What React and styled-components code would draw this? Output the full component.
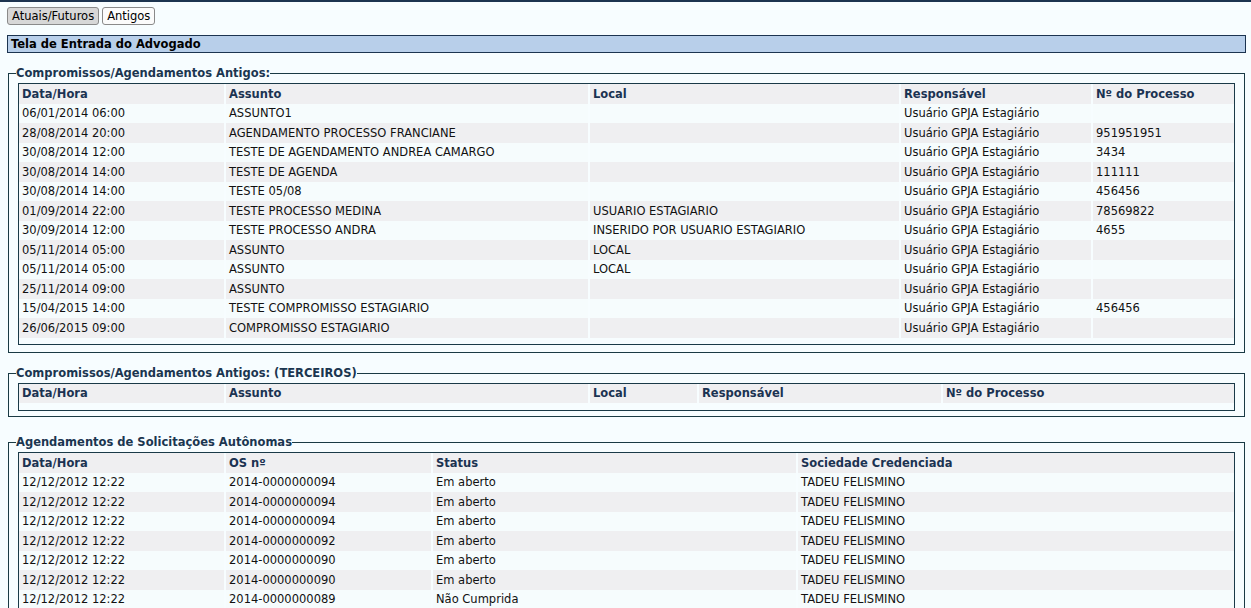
import React from "react";
import styled, { createGlobalStyle } from "styled-components";

const Global = createGlobalStyle`
  html, body { margin: 0; padding: 0; }
  body {
    background: #f7fdff;
    font-family: "DejaVu Sans", Verdana, sans-serif;
    font-size: 11.5px;
    color: #111;
    border-top: 2px solid #1c3450;
  }
`;

const Page = styled.div`
  padding: 5px 5px 0 7px;
`;

const Tabs = styled.div`
  display: flex;
  gap: 3px;
  margin-bottom: 10px;
`;

const TabButton = styled.button`
  font-family: "DejaVu Sans", Verdana, sans-serif;
  font-size: 11.5px;
  height: 18px;
  padding: 0 4px;
  border: 1px solid #8a8a8a;
  border-radius: 3px;
  color: #000;
  background: ${(p) => (p.$active ? "#d7d7d7" : "#fbfbfb")};
  line-height: 14px;
`;

const TitleBar = styled.div`
  background: #b8cfea;
  border: 1px solid #1c3450;
  font-weight: bold;
  height: 16px;
  line-height: 16px;
  padding-left: 3px;
  margin-bottom: 14px;
  color: #000;
`;

const Field = styled.fieldset`
  min-width: 0;
  margin: 0 1px ${(p) => p.$mb || 0}px 1px;
  padding: 3px 9px ${(p) => p.$pb ?? 7}px 9px;
  border: 1px solid #1a3a44;
  border-radius: 0;
`;

const Legend = styled.legend`
  font-weight: bold;
  color: #1b3650;
  padding: 0;
  margin-left: -2px;
  line-height: 13px;
`;

const TableBox = styled.div`
  border: 1px solid #1a3a48;
  padding: 0 0 ${(p) => p.$pb || 6}px 0;
  overflow: hidden;
`;

const Table = styled.table`
  table-layout: fixed;
  border-collapse: separate;
  border-spacing: 2px 0;
  margin: 0 -2px;
  width: calc(100% + 4px);
`;

const Th = styled.th`
  text-align: left;
  font-weight: bold;
  color: #1b3352;
  background: #efeff1;
  padding: 0 0 0 3px;
  height: 19.5px;
  white-space: nowrap;
`;

const Tr = styled.tr`
  background: ${(p) => (p.$odd ? "#efeff1" : "#f6fcfd")};
`;

const Td = styled.td`
  padding: 0 0 0 3px;
  height: 19.5px;
  white-space: nowrap;
  overflow: hidden;
`;

const compCols = [205, 362, 309, 190, 142];
const compHeaders = ["Data/Hora", "Assunto", "Local", "Responsável", "Nº do Processo"];
const R = "Usuário GPJA Estagiário";
const compRows = [
  ["06/01/2014 06:00", "ASSUNTO1", "", R, ""],
  ["28/08/2014 20:00", "AGENDAMENTO PROCESSO FRANCIANE", "", R, "951951951"],
  ["30/08/2014 12:00", "TESTE DE AGENDAMENTO ANDREA CAMARGO", "", R, "3434"],
  ["30/08/2014 14:00", "TESTE DE AGENDA", "", R, "111111"],
  ["30/08/2014 14:00", "TESTE 05/08", "", R, "456456"],
  ["01/09/2014 22:00", "TESTE PROCESSO MEDINA", "USUARIO ESTAGIARIO", R, "78569822"],
  ["30/09/2014 12:00", "TESTE PROCESSO ANDRA", "INSERIDO POR USUARIO ESTAGIARIO", R, "4655"],
  ["05/11/2014 05:00", "ASSUNTO", "LOCAL", R, ""],
  ["05/11/2014 05:00", "ASSUNTO", "LOCAL", R, ""],
  ["25/11/2014 09:00", "ASSUNTO", "", R, ""],
  ["15/04/2015 14:00", "TESTE COMPROMISSO ESTAGIARIO", "", R, "456456"],
  ["26/06/2015 09:00", "COMPROMISSO ESTAGIARIO", "", R, ""],
];

const terCols = [205, 362, 107, 242, 292];
const terHeaders = ["Data/Hora", "Assunto", "Local", "Responsável", "Nº do Processo"];

const autCols = [205, 205, 363, 437];
const autHeaders = ["Data/Hora", "OS nº", "Status", "Sociedade Credenciada"];
const T = "TADEU FELISMINO";
const D = "12/12/2012 12:22";
const autRows = [
  [D, "2014-0000000094", "Em aberto", T],
  [D, "2014-0000000094", "Em aberto", T],
  [D, "2014-0000000094", "Em aberto", T],
  [D, "2014-0000000092", "Em aberto", T],
  [D, "2014-0000000090", "Em aberto", T],
  [D, "2014-0000000090", "Em aberto", T],
  [D, "2014-0000000089", "Não Cumprida", T],
];

function Grid({ cols, headers, rows, pb }) {
  return (
    <TableBox $pb={pb}>
      <Table>
        <colgroup>
          {cols.map((w, i) => (
            <col key={i} style={{ width: w }} />
          ))}
        </colgroup>
        <thead>
          <tr>
            {headers.map((h) => (
              <Th key={h}>{h}</Th>
            ))}
          </tr>
        </thead>
        <tbody>
          {rows.map((r, i) => (
            <Tr key={i} $odd={i % 2 === 1}>
              {r.map((c, j) => (
                <Td key={j}>{c}</Td>
              ))}
            </Tr>
          ))}
        </tbody>
      </Table>
    </TableBox>
  );
}

export default function App() {
  return (
    <>
      <Global />
      <Page>
        <Tabs>
          <TabButton $active>Atuais/Futuros</TabButton>
          <TabButton>Antigos</TabButton>
        </Tabs>
        <TitleBar>Tela de Entrada do Advogado</TitleBar>
        <Field $mb={14}>
          <Legend>Compromissos/Agendamentos Antigos:</Legend>
          <Grid cols={compCols} headers={compHeaders} rows={compRows} />
        </Field>
        <Field $mb={19} $pb={5}>
          <Legend>Compromissos/Agendamentos Antigos: (TERCEIROS)</Legend>
          <Grid cols={terCols} headers={terHeaders} rows={[]} pb={7} />
        </Field>
        <Field>
          <Legend>Agendamentos de Solicitações Autônomas</Legend>
          <Grid cols={autCols} headers={autHeaders} rows={autRows} />
        </Field>
      </Page>
    </>
  );
}
